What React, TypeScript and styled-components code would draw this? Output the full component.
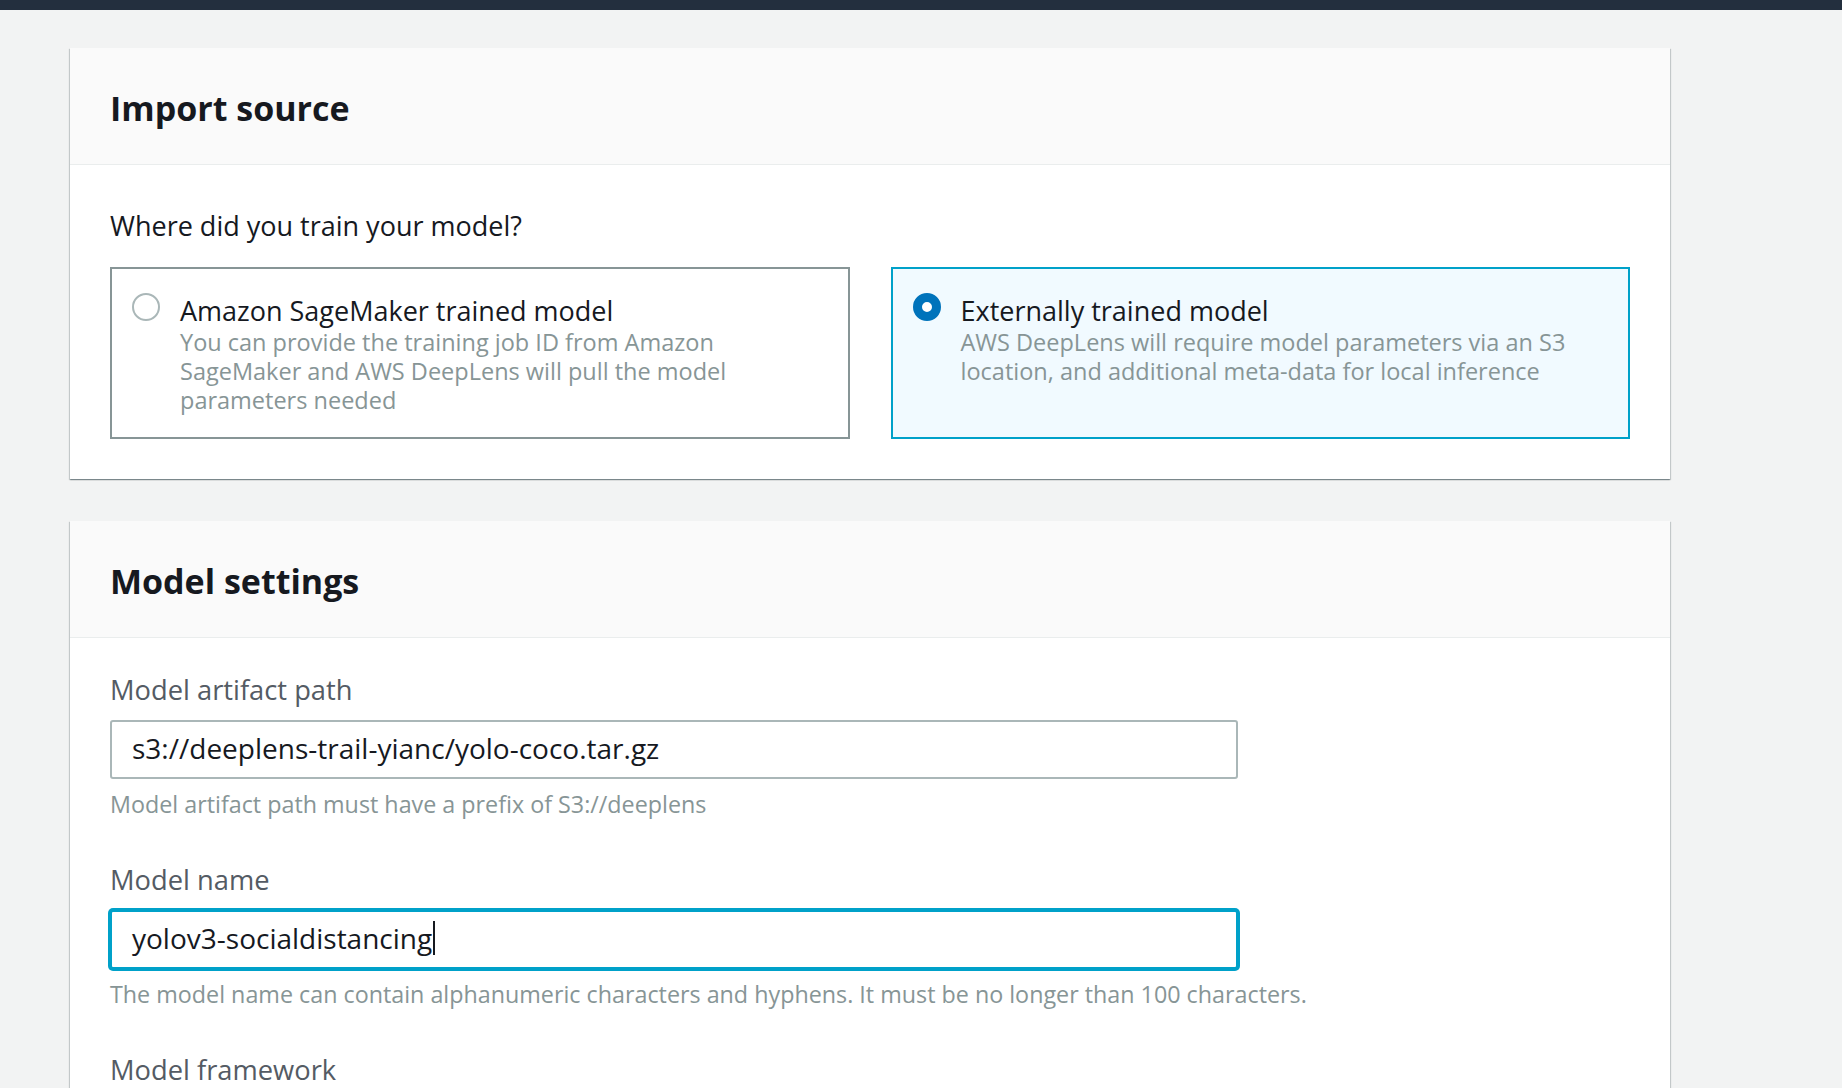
import React from "react";
import styled, { createGlobalStyle } from "styled-components";

const GlobalStyle = createGlobalStyle`
  html, body {
    margin: 0;
    padding: 0;
  }
  body {
    background: #f2f3f3;
    font-family: "Open Sans", "Noto Sans", Arial, sans-serif;
    color: #16191f;
    -webkit-font-smoothing: antialiased;
  }
  * {
    box-sizing: border-box;
  }
`;

const TopBar = styled.div`
  height: 10px;
  background: #232f3e;
`;

const Main = styled.main`
  padding: 38px 0 0 70px;
  display: flex;
  flex-direction: column;
  gap: 42px;
`;

const Card = styled.section`
  width: 1600px;
  background: #ffffff;
  box-shadow: 0 1px 1px 0 rgba(0, 28, 36, 0.3),
    1px 1px 1px 0 rgba(0, 28, 36, 0.15),
    -1px 1px 1px 0 rgba(0, 28, 36, 0.15);
`;

const CardHeader = styled.header`
  background: #fafafa;
  border-bottom: 1px solid #eaeded;
  padding: 37px 40px 33px;
`;

const CardTitle = styled.h2`
  margin: 0;
  font-size: 34px;
  line-height: 46px;
  font-weight: 700;
  color: #16191f;
`;

const CardBody = styled.div<{ $top: number }>`
  padding: ${(p) => p.$top}px 40px 40px;
`;

const Question = styled.div`
  font-size: 27px;
  line-height: 40px;
  color: #16191f;
  margin-bottom: 21px;
`;

const TileGrid = styled.div`
  display: grid;
  grid-template-columns: 1fr 1fr;
  gap: 41px;
`;

const Tile = styled.label<{ $selected?: boolean }>`
  display: flex;
  align-items: flex-start;
  gap: 20px;
  padding: 24px 40px 22px 20px;
  border: 2px solid ${(p) => (p.$selected ? "#00a1c9" : "#879596")};
  background: ${(p) => (p.$selected ? "#f1faff" : "#ffffff")};
  cursor: pointer;
`;

const Radio = styled.span<{ $checked?: boolean }>`
  flex: none;
  width: 28px;
  height: 28px;
  border-radius: 50%;
  background: #ffffff;
  border: ${(p) => (p.$checked ? "9px solid #0073bb" : "2px solid #aab7b8")};
`;

const TileText = styled.div`
  margin-top: 3px;
  display: flex;
  flex-direction: column;
  gap: 2px;
`;

const TileTitle = styled.span`
  font-size: 27px;
  line-height: 30px;
  color: #16191f;
`;

const TileDesc = styled.span`
  font-size: 23.5px;
  line-height: 29px;
  color: #879596;
`;

const Field = styled.div`
  & + & {
    margin-top: 43px;
  }
`;

const Label = styled.div`
  font-size: 27.3px;
  line-height: 36px;
  color: #545b64;
`;

const InputBox = styled.div<{ $focused?: boolean }>`
  margin-top: 12px;
  width: 1128px;
  height: 59px;
  display: flex;
  align-items: center;
  padding: 0 20px 3px;
  border: 2px solid ${(p) => (p.$focused ? "#00a1c9" : "#aab7b8")};
  border-radius: 3px;
  background: #ffffff;
  box-shadow: ${(p) => (p.$focused ? "0 0 0 2px #00a1c9" : "none")};
  font-size: 28px;
  color: #16191f;
  white-space: pre;
`;

const Caret = styled.span`
  flex: none;
  width: 2px;
  height: 34px;
  margin-left: 1px;
  background: #16191f;
`;

const Hint = styled.div`
  margin-top: 11px;
  font-size: 23.3px;
  line-height: 29px;
  color: #879596;
`;

const tiles = [
  {
    title: "Amazon SageMaker trained model",
    desc: "You can provide the training job ID from Amazon SageMaker and AWS DeepLens will pull the model parameters needed",
    selected: false,
  },
  {
    title: "Externally trained model",
    desc: "AWS DeepLens will require model parameters via an S3 location, and additional meta-data for local inference",
    selected: true,
  },
];

export default function App() {
  return (
    <>
      <GlobalStyle />
      <TopBar />
      <Main>
        <Card>
          <CardHeader>
            <CardTitle>Import source</CardTitle>
          </CardHeader>
          <CardBody $top={41}>
            <Question>Where did you train your model?</Question>
            <TileGrid>
              {tiles.map((t) => (
                <Tile key={t.title} $selected={t.selected}>
                  <Radio $checked={t.selected} />
                  <TileText>
                    <TileTitle>{t.title}</TileTitle>
                    <TileDesc>{t.desc}</TileDesc>
                  </TileText>
                </Tile>
              ))}
            </TileGrid>
          </CardBody>
        </Card>

        <Card>
          <CardHeader>
            <CardTitle>Model settings</CardTitle>
          </CardHeader>
          <CardBody $top={34}>
            <Field>
              <Label>Model artifact path</Label>
              <InputBox>s3://deeplens-trail-yianc/yolo-coco.tar.gz</InputBox>
              <Hint>Model artifact path must have a prefix of S3://deeplens</Hint>
            </Field>
            <Field>
              <Label>Model name</Label>
              <InputBox $focused>
                yolov3-socialdistancing
                <Caret />
              </InputBox>
              <Hint>
                The model name can contain alphanumeric characters and hyphens. It must be no longer than 100 characters.
              </Hint>
            </Field>
            <Field>
              <Label>Model framework</Label>
            </Field>
          </CardBody>
        </Card>
      </Main>
    </>
  );
}
